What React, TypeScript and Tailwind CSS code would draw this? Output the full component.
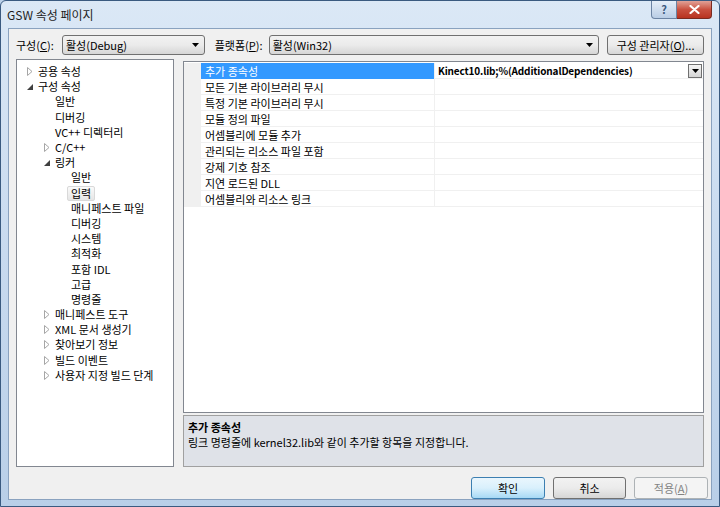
// GSW 속성 페이지 - Visual Studio 2010 프로젝트 속성 대화상자 (Windows 7 Aero)

type TreeItem = { label: string; level: number; arrow?: 'open' | 'closed'; selected?: boolean }

const treeItems: TreeItem[] = [
  { label: '공용 속성', level: 0, arrow: 'closed' },
  { label: '구성 속성', level: 0, arrow: 'open' },
  { label: '일반', level: 1 },
  { label: '디버깅', level: 1 },
  { label: 'VC++ 디렉터리', level: 1 },
  { label: 'C/C++', level: 1, arrow: 'closed' },
  { label: '링커', level: 1, arrow: 'open' },
  { label: '일반', level: 2 },
  { label: '입력', level: 2, selected: true },
  { label: '매니페스트 파일', level: 2 },
  { label: '디버깅', level: 2 },
  { label: '시스템', level: 2 },
  { label: '최적화', level: 2 },
  { label: '포함 IDL', level: 2 },
  { label: '고급', level: 2 },
  { label: '명령줄', level: 2 },
  { label: '매니페스트 도구', level: 1, arrow: 'closed' },
  { label: 'XML 문서 생성기', level: 1, arrow: 'closed' },
  { label: '찾아보기 정보', level: 1, arrow: 'closed' },
  { label: '빌드 이벤트', level: 1, arrow: 'closed' },
  { label: '사용자 지정 빌드 단계', level: 1, arrow: 'closed' },
]

const properties = [
  '추가 종속성',
  '모든 기본 라이브러리 무시',
  '특정 기본 라이브러리 무시',
  '모듈 정의 파일',
  '어셈블리에 모듈 추가',
  '관리되는 리소스 파일 포함',
  '강제 기호 참조',
  '지연 로드된 DLL',
  '어셈블리와 리소스 링크',
]

const levelPad = ['pl-[10px]', 'pl-[27px]', 'pl-[43px]']

const Arrow = ({ kind }: { kind?: 'open' | 'closed' }) => {
  if (!kind) return <span className="w-[11px] shrink-0" />
  return (
    <span className="w-[11px] shrink-0 flex items-center">
      {kind === 'closed' ? (
        <svg width="6" height="9" viewBox="0 0 6 9">
          <path d="M0.5 0.5 L5 4.5 L0.5 8.5 Z" fill="none" stroke="#a6a6a6" />
        </svg>
      ) : (
        <svg width="6" height="6" viewBox="0 0 6 6">
          <path d="M6 0 L6 6 L0 6 Z" fill="#404040" />
        </svg>
      )}
    </span>
  )
}

const DownTri = () => (
  <svg width="7" height="4" viewBox="0 0 7 4">
    <path d="M0 0 H7 L3.5 4 Z" fill="#000" />
  </svg>
)

const Combo = ({ value, width }: { value: string; width: string }) => (
  <div
    className={`${width} h-[20px] flex items-center justify-between rounded-[3px] border border-[#707070] bg-gradient-to-b from-[#f2f2f2] via-[#ebebeb] to-[#d6d6d6] pl-[3px] pr-[5px] text-[#000]`}
  >
    <span>{value}</span>
    <DownTri />
  </div>
)

export default function App() {
  return (
    <div className="w-[720px] h-[507px] overflow-hidden bg-[#bcd1e9] font-['Noto_Sans_CJK_KR',sans-serif] text-[11px] text-black">
      <div className="w-full h-full rounded-t-[6px] border border-[#3a5a80] bg-gradient-to-b from-[#dbe8f6] via-[#c8daef] to-[#b9cfe8] flex flex-col">
        {/* 제목 표시줄 */}
        <div className="h-[27px] flex items-start justify-between">
          <span className="pl-[6px] pt-[5px] text-[12px] text-[#1e1e1e]">GSW 속성 페이지</span>
          <div className="flex mr-[7px]">
            <div className="w-[26px] h-[18px] rounded-bl-[4px] border border-t-0 border-[#6b83a3] bg-gradient-to-b from-[#e6eef8] to-[#b9cde5] flex items-center justify-center text-[11px] font-bold text-[#3d5a7e]">
              ?
            </div>
            <div className="w-[35px] h-[18px] rounded-br-[4px] border border-l-0 border-t-0 border-[#7a2a20] bg-gradient-to-b from-[#e0a197] via-[#c9503f] to-[#b8321f] flex items-center justify-center">
              <svg width="11" height="9" viewBox="0 0 11 9">
                <path d="M1.5 1 L9.5 8 M9.5 1 L1.5 8" stroke="#fff" strokeWidth="2.2" strokeLinecap="round" />
              </svg>
            </div>
          </div>
        </div>

        {/* 클라이언트 영역 */}
        <div className="mx-[7px] mb-[6px] flex-1 border border-[#8aa2bf] bg-[#f0f0f0] flex flex-col px-[7px] pt-[6px]">
          {/* 구성 / 플랫폼 */}
          <div className="flex items-center h-[20px]">
            <span className="w-[46px]">
              구성(<span className="underline">C</span>):
            </span>
            <Combo value="활성(Debug)" width="w-[143px]" />
            <span className="ml-[10px] w-[54px]">
              플랫폼(<span className="underline">P</span>):
            </span>
            <Combo value="활성(Win32)" width="w-[331px]" />
            <div className="ml-[8px] w-[97px] h-[20px] rounded-[3px] border border-[#707070] bg-gradient-to-b from-[#f2f2f2] via-[#ebebeb] to-[#d6d6d6] flex items-center justify-center">
              구성 관리자(<span className="underline">O</span>)...
            </div>
          </div>

          {/* 본문 */}
          <div className="flex mt-[4px] h-[408px]">
            {/* 트리 */}
            <div className="w-[158px] h-full border border-[#828790] bg-white pt-[4px]">
              {treeItems.map((item, i) => (
                <div key={i} className={`h-[15.2px] flex items-center ${levelPad[item.level]}`}>
                  <Arrow kind={item.arrow} />
                  <span
                    className={
                      item.selected
                        ? 'ml-[-4px] px-[3px] h-[15px] leading-[13px] rounded-[2px] border border-[#d9d9d9] bg-gradient-to-b from-[#fafafa] to-[#e6e6e6]'
                        : 'leading-[15px]'
                    }
                  >
                    {item.label}
                  </span>
                </div>
              ))}
            </div>

            {/* 속성 그리드 + 설명 */}
            <div className="ml-[9px] flex-1 flex flex-col mt-[2px]">
              <div className="h-[352px] border border-[#828790] bg-white pt-[1px]">
                {properties.map((name, i) => (
                  <div key={i} className="h-[16px] flex">
                    <div className="w-[17px] bg-[#f0f0f0]" />
                    <div
                      className={`w-[233px] pl-[4px] leading-[16px] border-b ${
                        i === 0 ? 'bg-[#3399ff] text-white border-[#3399ff]' : 'border-[#f0f0f0]'
                      }`}
                    >
                      {name}
                    </div>
                    <div className="flex-1 border-l border-b border-[#f0f0f0] flex items-center justify-between pl-[3px] pr-[1px]">
                      {i === 0 && (
                        <>
                          <span className="font-bold text-[10px] tracking-[-0.15px] leading-[15px]">
                            Kinect10.lib;%(AdditionalDependencies)
                          </span>
                          <div className="w-[14px] h-[14px] border border-[#707070] bg-gradient-to-b from-[#f6f6f6] to-[#d4d4d4] flex items-center justify-center">
                            <DownTri />
                          </div>
                        </>
                      )}
                    </div>
                  </div>
                ))}
              </div>
              <div className="mt-[2px] flex-1 border border-[#a0a0a0] bg-[#dfe2e8] px-[4px] pt-[4px] leading-[15px]">
                <div className="font-bold">추가 종속성</div>
                <div>링크 명령줄에 kernel32.lib와 같이 추가할 항목을 지정합니다.</div>
              </div>
            </div>
          </div>

          {/* 버튼 */}
          <div className="flex justify-end gap-[8px] mt-[10px] mr-[-4px]">
            <div className="w-[74px] h-[22px] rounded-[3px] border border-[#3c7fb1] bg-gradient-to-b from-[#eaf6fd] via-[#d9f0fc] to-[#a7d9f5] flex items-center justify-center">
              확인
            </div>
            <div className="w-[73px] h-[22px] rounded-[3px] border border-[#707070] bg-gradient-to-b from-[#f2f2f2] via-[#ebebeb] to-[#d6d6d6] flex items-center justify-center">
              취소
            </div>
            <div className="w-[74px] h-[22px] rounded-[3px] border border-[#adb2b5] bg-[#f4f4f4] text-[#838383] flex items-center justify-center">
              적용(<span className="underline">A</span>)
            </div>
          </div>
        </div>
      </div>
    </div>
  )
}
